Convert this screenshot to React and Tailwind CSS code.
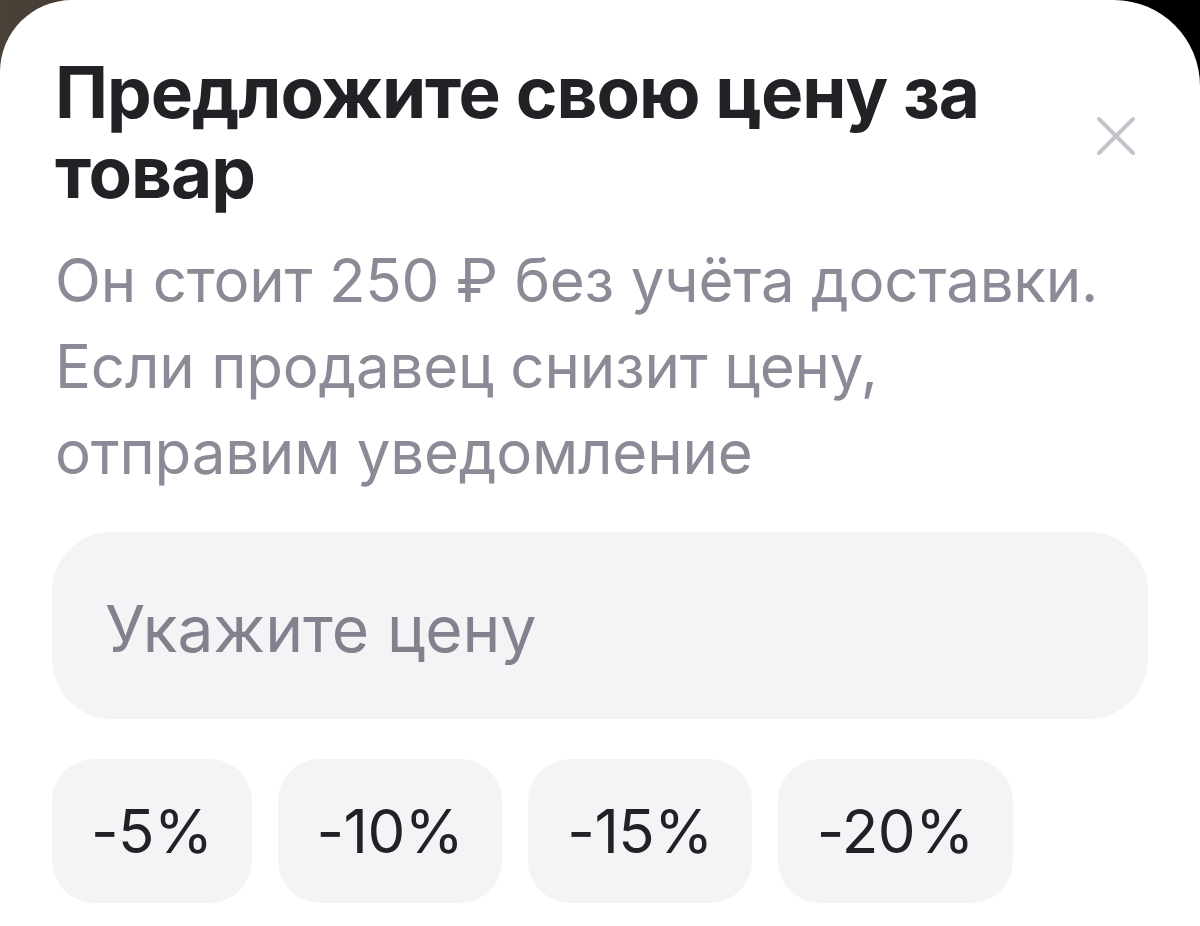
import React, { useState } from "react";

const discounts = ["-5%", "-10%", "-15%", "-20%"];

const CloseIcon = () => (
  <svg width="40" height="40" viewBox="0 0 40 40" fill="none">
    <path
      d="M3 3L37 37M37 3L3 37"
      stroke="#c3c3cd"
      strokeWidth="4"
      strokeLinecap="round"
    />
  </svg>
);

const App = () => {
  const [price, setPrice] = useState("");

  return (
    <div className="w-[1200px] h-[926px] overflow-hidden bg-gradient-to-r from-[#4a4138] via-[#1a1713] to-black font-['Inter','Noto_Sans',sans-serif]">
      <div className="h-full bg-white rounded-tl-[72px] rounded-tr-[86px] px-[52px] pt-[52px]">
        {/* Header */}
        <div className="flex items-start justify-between">
          <h1 className="w-[960px] pl-[3px] text-[71px] leading-[80px] font-bold tracking-[-1px] text-[#222226]">
            Предложите свою цену за товар
          </h1>
          <button className="mt-[64px] mr-[12px] shrink-0">
            <CloseIcon />
          </button>
        </div>

        <p className="mt-[25px] pl-[3px] text-[60px] leading-[86px] tracking-[-0.2px] text-[#8b8a96]">
          Он стоит 250 ₽ без учёта доставки.
          <br />
          Если продавец снизит цену,
          <br />
          отправим уведомление
        </p>

        {/* Price input */}
        <div className="mt-[37px] h-[187px] rounded-[60px] bg-[#f4f4f6] flex items-center px-[53px]">
          <input
            value={price}
            onChange={(e) => setPrice(e.target.value)}
            placeholder="Укажите цену"
            className="w-full bg-transparent outline-none text-[64px] pt-[6px] text-[#222226] placeholder:text-[#82818d]"
          />
        </div>

        {/* Discount chips */}
        <div className="mt-[40px] flex gap-[26px]">
          {discounts.map((d) => (
            <button
              key={d}
              className="h-[144px] px-[39px] rounded-[42px] bg-[#f4f4f6] text-[60px] tracking-[-0.5px] text-[#222226]"
            >
              {d}
            </button>
          ))}
        </div>
      </div>
    </div>
  );
};

export default App;
